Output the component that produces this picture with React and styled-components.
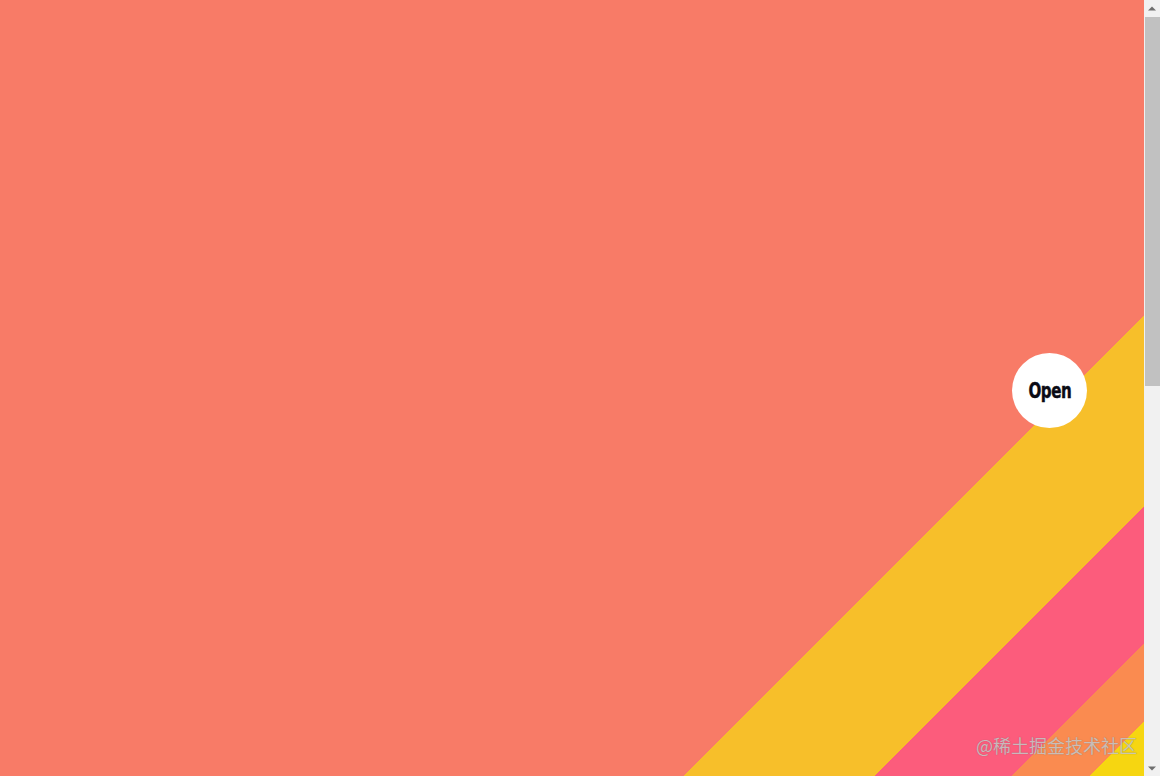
import React from "react";
import styled, { createGlobalStyle } from "styled-components";

const GlobalStyle = createGlobalStyle`
  html, body {
    margin: 0;
    padding: 0;
    overflow: hidden;
  }
  body {
    font-family: "Liberation Sans", Arial, sans-serif;
    background: #f87b67;
  }
`;

const Frame = styled.div`
  display: flex;
  height: 100vh;
  width: 100vw;
`;

const Content = styled.main`
  position: relative;
  flex: 1;
  min-width: 0;
  overflow: hidden;
`;

const Hero = styled.section`
  height: 100vh;
  background: linear-gradient(
    135deg,
    #f87b67 1032px,
    #f7bf2a 1032px,
    #f7bf2a 1167px,
    #fc5c7c 1167px,
    #fc5c7c 1264px,
    #fa8b50 1264px,
    #fa8b50 1319px,
    #f6d611 1319px
  );
`;

const Rail = styled.div`
  width: 16px;
  flex: none;
  display: flex;
  flex-direction: column;
  background: #f1f1f1;
`;

const RailArrow = styled.div`
  height: 16px;
  flex: none;
  display: flex;
  align-items: center;
  justify-content: center;
`;

const Track = styled.div`
  flex: 1;
  display: flex;
  flex-direction: column;
  padding-top: 1px;
`;

const Thumb = styled.div`
  height: 49.6%;
  background: #c1c1c1;
  margin-left: 1px;
`;

const OpenButton = styled.button`
  position: absolute;
  top: calc(50% - 35px);
  right: 57px;
  width: 75px;
  height: 75px;
  border: none;
  border-radius: 50%;
  background: #ffffff;
  color: #0a0a14;
  font-family: "DejaVu Sans", sans-serif;
  font-stretch: condensed;
  font-weight: 700;
  font-size: 21px;
  display: flex;
  align-items: center;
  justify-content: center;
  padding: 0;
  cursor: pointer;
`;

const ButtonLabel = styled.span`
  display: inline-block;
  letter-spacing: -0.5px;
  transform: scale(0.8, 1.05);
  -webkit-text-stroke: 0.4px #0a0a14;
`;

const Watermark = styled.div`
  position: absolute;
  right: 7px;
  bottom: 20px;
  font-family: "Noto Sans CJK SC", "Noto Sans", sans-serif;
  font-size: 18px;
  line-height: 22px;
  color: rgba(215, 215, 215, 0.75);
  text-shadow: 0 0 1px rgba(90, 90, 90, 0.6);
  pointer-events: none;
  white-space: nowrap;
`;

function Arrow({ up }) {
  return (
    <svg width="8" height="5" viewBox="0 0 8 5">
      <polygon points={up ? "0,4.5 8,4.5 4,0.5" : "0,0.5 8,0.5 4,4.5"} fill="#6e6e6e" />
    </svg>
  );
}

export default function App() {
  return (
    <>
      <GlobalStyle />
      <Frame>
        <Content>
          <Hero />
          <OpenButton type="button">
            <ButtonLabel>Open</ButtonLabel>
          </OpenButton>
          <Watermark>@稀土掘金技术社区</Watermark>
        </Content>
        <Rail>
          <RailArrow>
            <Arrow up />
          </RailArrow>
          <Track>
            <Thumb />
          </Track>
          <RailArrow>
            <Arrow />
          </RailArrow>
        </Rail>
      </Frame>
    </>
  );
}
